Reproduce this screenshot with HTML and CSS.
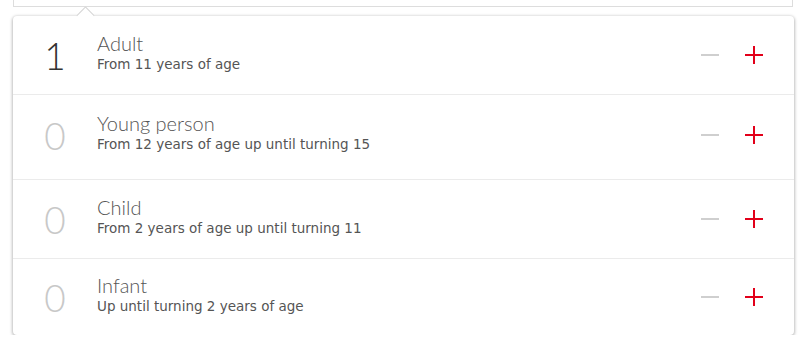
FILE: index.html
```html
<!DOCTYPE html>
<html lang="en">
<head>
    <meta charset="UTF-8">
    <title>Passengers</title>
    <link rel="stylesheet" href="styles.css">
</head>
<body>
    <div class="field"></div>

    <div class="picker">
        <div class="row">
            <div class="count">1</div>
            <div class="info">
                <div class="title">Adult</div>
                <div class="sub">From 11 years of age</div>
            </div>
            <button class="btn minus" aria-label="Remove"></button>
            <button class="btn plus" aria-label="Add"></button>
        </div>
        <div class="row tall">
            <div class="count empty">0</div>
            <div class="info">
                <div class="title">Young person</div>
                <div class="sub">From 12 years of age up until turning 15</div>
            </div>
            <button class="btn minus" aria-label="Remove"></button>
            <button class="btn plus" aria-label="Add"></button>
        </div>
        <div class="row">
            <div class="count empty">0</div>
            <div class="info">
                <div class="title">Child</div>
                <div class="sub">From 2 years of age up until turning 11</div>
            </div>
            <button class="btn minus" aria-label="Remove"></button>
            <button class="btn plus" aria-label="Add"></button>
        </div>
        <div class="row">
            <div class="count empty">0</div>
            <div class="info">
                <div class="title">Infant</div>
                <div class="sub">Up until turning 2 years of age</div>
            </div>
            <button class="btn minus" aria-label="Remove"></button>
            <button class="btn plus" aria-label="Add"></button>
        </div>
    </div>
</body>
</html>
```

FILE: styles.css
```css
body {
    margin: 0;
    background: #fff;
    font-family: 'Lato', sans-serif;
    color: #555;
    overflow: hidden;
}

.field {
    height: 6px;
    margin: 0 7px 0 13px;
    border: 1px solid #ddd;
    border-top: none;
}

.picker {
    position: relative;
    margin: 9px 6px 0 13px;
    background: #fff;
    border-radius: 4px;
    box-shadow: 0 1px 3px 1px rgba(0, 0, 0, 0.25);
    display: grid;
    grid-template-rows: 78px 85px 79px 77px;
}

/* little pointer up to the field */
.picker::before {
    content: '';
    position: absolute;
    top: -7px;
    left: 66px;
    width: 12px;
    height: 12px;
    background: #fff;
    border-left: 1px solid #d4d4d4;
    border-top: 1px solid #d4d4d4;
    transform: rotate(45deg);
}

.row {
    display: flex;
    align-items: center;
    border-top: 1px solid #ebebeb;
}

.row:first-child {
    border-top: none;
}

.row.tall {
    padding-bottom: 4px;
}

.count {
    width: 84px;
    text-align: center;
    font-size: 37px;
    font-weight: 300;
    color: #333;
}

.count.empty {
    color: #c8c8c8;
}

.info {
    flex: 1;
    margin-top: -4px;
}

.title {
    font-size: 20px;
    font-weight: 300;
    color: #555;
    line-height: 22px;
}

.sub {
    font-family: 'DejaVu Sans', sans-serif;
    font-size: 13.5px;
    color: #555;
    line-height: 20px;
}

.btn {
    position: relative;
    width: 18px;
    height: 18px;
    padding: 0;
    border: none;
    background: none;
    cursor: pointer;
}

.btn::before,
.btn::after {
    content: '';
    position: absolute;
    left: 0;
    top: 8px;
    width: 18px;
    height: 2px;
}

.minus {
    margin-right: 26px;
}

.minus::before {
    background: #cfcfcf;
}

.plus {
    margin-right: 31px;
}

.plus::before,
.plus::after {
    background: #e2001a;
}

.plus::after {
    transform: rotate(90deg);
}
```
